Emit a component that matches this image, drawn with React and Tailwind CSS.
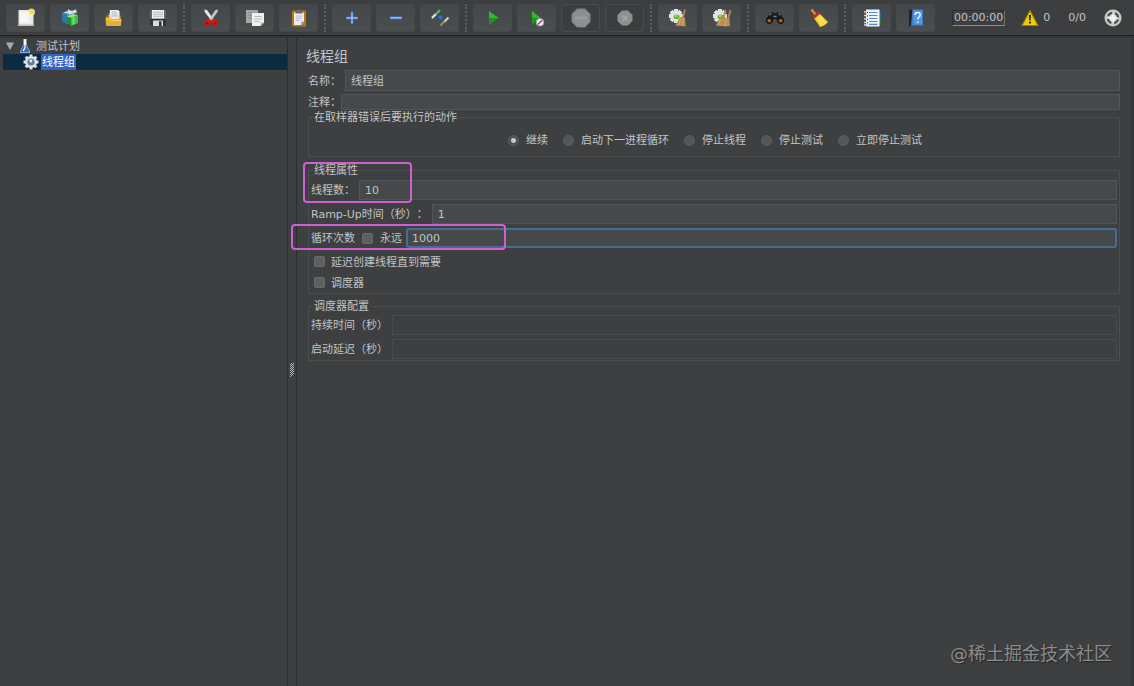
import { useState } from "react";
import clsx from "clsx";

const NewIcon = () => (
  <svg width="20" height="20" viewBox="0 0 20 20">
    <path d="M2.5 2h15v16h-15z" fill="#e9eae6" />
    <path d="M2.5 16.5h15V18h-15z" fill="#bfc1bd" />
    <path d="M4 4h9v11H4z" fill="#f6f6f3" />
    <circle cx="15.5" cy="4" r="3.6" fill="#f1ef9a" opacity="0.8" />
    <circle cx="15.5" cy="4" r="1.8" fill="#e4de3c" />
  </svg>
);

const TemplatesIcon = () => (
  <svg width="20" height="20" viewBox="0 0 20 20">
    <path d="M2 5l6-2 3 2v10l-3 1-6-3z" fill="#4d8fc0" />
    <path d="M2 5l5 1.5V16L2 13z" fill="#2f76ad" />
    <path d="M3 4.6l5-1.8 8-.3 1.5 1.8-6 2.2z" fill="#c3d3da" />
    <path d="M8 1.8l3 2.2-2 2M16 1.8l-3 2" stroke="#e5edf0" strokeWidth="1.2" fill="none" />
    <path d="M7 8.5l4 1.3v8L7 15.5z" fill="#1d9426" />
    <path d="M11 9.8L18 7v8l-7 2.8z" fill="#37c43c" />
    <path d="M7 8.5L13 6l5 1-7 2.8z" fill="#91e887" />
    <path d="M12.5 9.3l2-.8v7.8l-2 .8z" fill="#78dc6b" />
  </svg>
);

const OpenIcon = () => (
  <svg width="20" height="20" viewBox="0 0 20 20">
    <path d="M2 8l3-2h10l2 2v4H2z" fill="#a97618" />
    <path d="M6 2h8l1.5 1.5V11H5z" fill="#eceef0" />
    <path d="M7.5 4h5M7.5 6h6M7 8h7" stroke="#9fa6ad" strokeWidth="0.8" />
    <path d="M1.5 10.5q0-1 1-1h4l1 1.3h9q1 0 1 1L17 17q0 1-1.2 1H3.2Q2 18 2 17z" fill="#eaaf35" />
    <path d="M2.3 11h4l1 1.3h9.5" stroke="#f8d477" fill="none" />
  </svg>
);

const SaveIcon = () => (
  <svg width="20" height="20" viewBox="0 0 20 20">
    <path d="M2 2.500q0-.500.500-.500h15q.500 0 .500.500V18H4l-2-2z" fill="#5f6467" />
    <path d="M2 11h16v7H4l-2-2z" fill="#2f3335" />
    <path d="M4 2h12v8.500H4z" fill="#f0f1f1" />
    <path d="M5 4.200h10M5 6.200h10M5 8.200h10" stroke="#a4a7a9" strokeWidth="0.8" />
    <path d="M5 12.500h10V18H5z" fill="#d9dbdc" />
    <path d="M11 13.300h2.500V18H11z" fill="#303335" />
  </svg>
);

const CutIcon = () => (
  <svg width="20" height="20" viewBox="0 0 20 20">
    <path d="M3.500 1.500l2.500.6L13 12l-2 1.500L3.700 4z" fill="#e6e8e9" />
    <path d="M17 1.500l-2.500.6L7.500 12l2 1.500L16.500 4z" fill="#c4c8ca" />
    <path d="M9 11l-4 .7-2 3.300L4.500 18.500l4-1 1.500-4.500M11 11l4 .7 2 3.300-1.500 3.500-4-1L10 13" fill="#d31510" />
    <circle cx="6" cy="15.500" r="1" fill="#6b1a18" />
    <circle cx="14.300" cy="15.500" r="1" fill="#6b1a18" />
  </svg>
);

const CopyIcon = () => (
  <svg width="20" height="20" viewBox="0 0 20 20">
    <path d="M1 2h12v13H1z" fill="#a3a6a7" />
    <path d="M3 5h7M3 7.500h4M3 10h4" stroke="#8b8f90" />
    <path d="M7 5h12v9.500L15.500 18H7z" fill="#eeefee" />
    <path d="M9.500 8.500h7M9.500 11h7M9.500 13.500h5" stroke="#b3b6b6" strokeWidth="0.9" />
    <path d="M15.500 18v-3.500H19z" fill="#bdc0c0" />
  </svg>
);

const PasteIcon = () => (
  <svg width="20" height="20" viewBox="0 0 20 20">
    <rect x="3" y="2.500" width="14" height="16" rx="1" fill="#b27a16" />
    <path d="M5 4.500h10v9L12 17H5z" fill="#ecebef" />
    <path d="M6.800 8h6.500M6.800 10.200h6.500M6.800 12.400h4" stroke="#b4b2ba" strokeWidth="0.9" />
    <path d="M12 17v-3.500h3z" fill="#a9a7ad" />
    <path d="M6.500 5.500v-2L8.500 3l.500-1.500h2L11.500 3l2 .500v2z" fill="#6e6864" />
  </svg>
);

const PlusIcon = () => (
  <svg width="20" height="20" viewBox="0 0 20 20">
    <path d="M10 4v12M4 10h12" stroke="#3d75c4" strokeWidth="2.600" />
    <path d="M10 4.500v11M4.500 10h11" stroke="#8fc0f4" strokeWidth="1.400" />
  </svg>
);

const MinusIcon = () => (
  <svg width="20" height="20" viewBox="0 0 20 20">
    <path d="M4 10h12" stroke="#3f78c8" strokeWidth="3" />
    <path d="M4.500 9.700h11" stroke="#98c3f2" strokeWidth="1.400" />
  </svg>
);

const ToggleIcon = () => (
  <svg width="20" height="20" viewBox="0 0 20 20">
    <path d="M2 10l4-4" stroke="#dfe0dc" strokeWidth="2.400" />
    <path d="M6 6l4-4" stroke="#6fae4e" strokeWidth="2.200" />
    <path d="M8 7l5 5" stroke="#1c50ad" strokeWidth="2.600" />
    <circle cx="10.500" cy="9.500" r="2" fill="#2e6fd6" />
    <path d="M10.500 17.500l4-4" stroke="#8a9a52" strokeWidth="2.200" />
    <path d="M14.500 13.500l4-4" stroke="#cfd9bf" strokeWidth="2.200" />
  </svg>
);

const StartIcon = () => (
  <svg width="20" height="20" viewBox="0 0 20 20">
    <path d="M6 3l9.500 7L6 17z" fill="#149a14" />
    <path d="M6 3l9.500 7H6z" fill="#35b52f" />
  </svg>
);

const StartNoPausesIcon = () => (
  <svg width="20" height="20" viewBox="0 0 20 20">
    <path d="M5 3l8.500 7L5 17z" fill="#149a14" />
    <path d="M5 3l8.500 7H5z" fill="#35b52f" />
    <circle cx="13" cy="14.300" r="3.800" fill="#f1f4f8" stroke="#7d9fc6" strokeWidth="0.800" />
    <path d="M10.800 16.400l4.400-4.200" stroke="#c8362e" strokeWidth="1.400" />
  </svg>
);

const StopIcon = () => (
  <svg width="20" height="20" viewBox="0 0 20 20">
    <path d="M6 .500h8L19.500 6v8L14 19.500H6L.500 14V6z" fill="#7e8181" />
    <path d="M6.500 1.500h7l5 5v7l-5 5h-7l-5-5v-7z" fill="#8c8f8f" />
    <path d="M4 8.500h12v3H4z" fill="#979a9a" />
  </svg>
);

const ShutdownIcon = () => (
  <svg width="20" height="20" viewBox="0 0 20 20">
    <path d="M7 2.500h6L17.500 7v6L13 17.500H7L2.500 13V7z" fill="#8e9191" />
    <path d="M7.500 7.500l5 5M12.500 7.500l-5 5" stroke="#a5a7a7" strokeWidth="1.600" />
  </svg>
);

const gearTeeth = [0, 45, 90, 135, 180, 225, 270, 315];

const SmallGear = () => (
  <g>
    {gearTeeth.map((a) => (
      <rect key={a} x="6" y="1" width="4" height="4" fill="#e2e5e6" transform={`rotate(${a} 8 8)`} />
    ))}
    <circle cx="8" cy="8" r="5.500" fill="#e2e5e6" />
    <ellipse cx="8.500" cy="8.700" rx="3" ry="2.300" fill="#62b51e" />
    <ellipse cx="8" cy="8" rx="1.600" ry="1" fill="#a6e35b" />
  </g>
);

const ClearIcon = () => (
  <svg width="20" height="20" viewBox="0 0 20 20">
    <SmallGear />
    <path d="M17 1.500l-2.200 8" stroke="#b28a58" strokeWidth="1.800" />
    <path d="M12 9l5 .500.500 9-10-1z" fill="#b98f56" />
    <path d="M12.800 11l-2 6M15 11l-.500 7" stroke="#d4ac70" strokeWidth="0.800" />
  </svg>
);

const ClearAllIcon = () => (
  <svg width="20" height="20" viewBox="0 0 20 20">
    <SmallGear />
    <path d="M13.500 2l-2 8M18.500 2l-2.200 8" stroke="#b28a58" strokeWidth="1.800" />
    <path d="M8 9.500l9.500.500.500 8-5 .500-9-1z" fill="#b98f56" />
    <path d="M9 11l-2.500 6M14 11l-1 7" stroke="#d4ac70" strokeWidth="0.800" />
  </svg>
);

const SearchIcon = () => (
  <svg width="20" height="20" viewBox="0 0 20 20">
    <path d="M4 6l3-2 2 1h2l2-1 3 2 3 7-5 2-3-4H9l-3 4-5-2z" fill="#1d1d1d" />
    <path d="M4.500 7l2-1.500M15.500 7l-2-1.500M8.500 8.500h3" stroke="#777b7c" strokeWidth="1.300" />
    <circle cx="4.300" cy="12.500" r="3" fill="#292421" stroke="#0d0d0d" />
    <circle cx="15.700" cy="12.500" r="3" fill="#292421" stroke="#0d0d0d" />
    <circle cx="4.300" cy="12.700" r="1.800" fill="#a5622f" />
    <circle cx="15.700" cy="12.700" r="1.800" fill="#a5622f" />
  </svg>
);

const BroomIcon = () => (
  <svg width="20" height="20" viewBox="0 0 20 20">
    <path d="M2.500 1.500l4 5" stroke="#d8892c" strokeWidth="2.800" />
    <path d="M10.500 5.500l8.500 8.500q-3 4-8 5L5 10z" fill="#f3cf2c" />
    <path d="M9 10l4.500 7M11 8.500l5.500 7" stroke="#fbf08b" strokeWidth="1.200" />
    <path d="M4 8.300L9.300 3.800l1.700 2L5.700 10.500z" fill="#c52a19" />
  </svg>
);

const FunctionIcon = () => (
  <svg width="20" height="20" viewBox="0 0 20 20">
    <path d="M17 4h1.500v13H17z" fill="#2a8e3b" />
    <path d="M17.500 6H19v4h-1.500z" fill="#2b62c0" />
    <rect x="4" y="1.500" width="13.500" height="17" fill="#f1f4f6" />
    <path d="M7 4.500h8.500M7 7.500h8.500M7 10.500h8.500M7 13.500h8.500M7 16.300h8.500" stroke="#4b8dce" strokeWidth="1.200" />
    <path d="M2 4h4M2 7.500h4M2 11h4M2 14.500h4M2 17h4" stroke="#d7d9da" strokeWidth="1.300" />
    <path d="M5 4.500h1M5 8h1M5 11.500h1M5 15h1" stroke="#333" />
  </svg>
);

const HelpIcon = () => (
  <svg width="20" height="20" viewBox="0 0 20 20">
    <path d="M3 2l3.500-.500V17L3 18.500z" fill="#15213d" />
    <path d="M6.500 1.500H17v16H5z" fill="#3a7fd0" />
    <path d="M7.500 2.500H16v14H7.500z" fill="#5596df" />
    <path d="M9 7q0-2.600 2.600-2.600T14.200 7q0 1.500-1.500 2.300-1 .6-1 2.200M11.700 13.600v1.500" stroke="#eaf4ff" strokeWidth="1.500" fill="none" />
  </svg>
);

const WarningIcon = () => (
  <svg width="18" height="18" viewBox="0 0 18 18">
    <path d="M9 1.500L17 16.500H1z" fill="#f1cb12" stroke="#9a7c08" strokeWidth="1.200" strokeLinejoin="round" />
    <path d="M8 6h2l-.4 5.500H8.400z" fill="#2a2408" />
    <circle cx="9" cy="13.600" r="1.100" fill="#2a2408" />
  </svg>
);

const RemoteIcon = () => (
  <svg width="18" height="18" viewBox="0 0 18 18">
    <circle cx="9" cy="9" r="8.500" fill="#c9cbcb" />
    <circle cx="9" cy="9" r="5.200" fill="#d8dada" stroke="#4b4e4f" strokeWidth="2.200" strokeDasharray="5.200 2.960" strokeDashoffset="-1.500" />
    <path d="M9 5.500v7M5.500 9h7" stroke="#f4f5f5" strokeWidth="2.400" />
  </svg>
);

const FlaskIcon = () => (
  <svg width="12" height="16" viewBox="0 0 12 16">
    <path d="M4.500 1h3v5.500l3.500 7Q11 15 9.500 15h-7Q1 15 1 13.500l3.500-7z" fill="#dfe8f0" />
    <path d="M4.500 7h3l3 6.500q0 1-1 1h-7q-1 0-1-1z" fill="#2e70c2" />
    <path d="M6 1.500v8l-1.800 3.500" stroke="#fff" strokeWidth="1.200" fill="none" />
  </svg>
);

const ThreadGroupIcon = () => (
  <svg width="16" height="16" viewBox="0 0 16 16">
    {gearTeeth.map((a) => (
      <rect key={a} x="6.500" y="0.500" width="3" height="4" fill="#dfe3e6" transform={`rotate(${a} 8 8)`} />
    ))}
    <circle cx="8" cy="8" r="6" fill="#dfe3e6" />
    <circle cx="8" cy="8" r="3.600" fill="#5d7c9c" />
    <path d="M6 6.300q2-1.600 3.500.2L8 9z" fill="#e9f1f8" />
  </svg>
);

const toolbarGroups = [
  [
    { title: "新建", Icon: NewIcon },
    { title: "模板", Icon: TemplatesIcon },
    { title: "打开", Icon: OpenIcon },
    { title: "保存", Icon: SaveIcon },
  ],
  [
    { title: "剪切", Icon: CutIcon },
    { title: "复制", Icon: CopyIcon },
    { title: "粘贴", Icon: PasteIcon },
  ],
  [
    { title: "展开", Icon: PlusIcon },
    { title: "折叠", Icon: MinusIcon },
    { title: "切换", Icon: ToggleIcon },
  ],
  [
    { title: "启动", Icon: StartIcon },
    { title: "不停顿开始", Icon: StartNoPausesIcon },
    { title: "停止", Icon: StopIcon, disabled: true },
    { title: "关闭", Icon: ShutdownIcon, disabled: true },
  ],
  [
    { title: "清除", Icon: ClearIcon },
    { title: "清除全部", Icon: ClearAllIcon },
  ],
  [
    { title: "查找", Icon: SearchIcon },
    { title: "重置搜索", Icon: BroomIcon },
  ],
  [
    { title: "函数助手", Icon: FunctionIcon },
    { title: "帮助", Icon: HelpIcon },
  ],
];

const errorActions = [
  { value: "continue", label: "继续" },
  { value: "startNextLoop", label: "启动下一进程循环" },
  { value: "stopThread", label: "停止线程" },
  { value: "stopTest", label: "停止测试" },
  { value: "stopTestNow", label: "立即停止测试" },
];

const ToolButton = ({ title, Icon, disabled }) => (
  <button
    type="button"
    aria-label={title}
    disabled={disabled}
    className={clsx(
      "flex h-7 w-[39px] items-center justify-center rounded-[3px] border",
      disabled
        ? "border-[#494b4d] bg-[#3b3d3f]"
        : "border-[#46494a] bg-linear-to-b from-[#45484a] to-[#4a4e4f]"
    )}
  >
    <Icon />
  </button>
);

const Toolbar = () => (
  <header className="flex h-9 shrink-0 items-center border-b border-[#1f2022] bg-[#3c3e40] pl-[6px] pr-3">
    {toolbarGroups.map((group, i) => (
      <div key={i} className="flex items-center">
        {i > 0 && (
          <div className="flex w-[14px] justify-center">
            <div className="h-7 border-l-2 border-dotted border-[#5c5f60]" />
          </div>
        )}
        <div className="flex gap-[5px]">
          {group.map((item) => (
            <ToolButton key={item.title} {...item} />
          ))}
        </div>
      </div>
    ))}
    <div className="ml-auto flex items-center whitespace-nowrap">
      <span className="border border-t-[#2c2e2f] border-l-[#2c2e2f] border-r-[#6a6d6e] border-b-[#8a8d8e] px-px leading-[14px]">
        00:00:00
      </span>
      <span className="ml-4 flex items-center gap-1">
        <WarningIcon />0
      </span>
      <span className="mx-[18px]">0/0</span>
      <RemoteIcon />
    </div>
  </header>
);

const TestTree = () => (
  <nav className="w-[288px] shrink-0 border-r border-[#2b2c2e] pl-[3px]">
    <ul>
      <li>
        <div className="flex h-4 items-center pl-[3px]">
          <svg width="8" height="8" viewBox="0 0 8 8">
            <path d="M0 .500h8L4 8z" fill="#a7a9aa" />
          </svg>
          <span className="ml-[5px]">
            <FlaskIcon />
          </span>
          <span className="ml-[5px] pt-[2px]">测试计划</span>
        </div>
        <ul>
          <li className="flex h-4 items-center bg-[#0c2a40] pl-5">
            <ThreadGroupIcon />
            <span className="ml-[2px] bg-[#3263c4] px-px pt-[2px] leading-[14px] text-white">线程组</span>
          </li>
        </ul>
      </li>
    </ul>
  </nav>
);

const Splitter = () => (
  <div className="flex w-[9px] shrink-0 items-center justify-center border-r border-[#2b2c2e] pt-4">
    <svg width="4" height="14" viewBox="0 0 4 14">
      <path d="M0 2l2-2M0 4l4-4M0 6l4-4M0 8l4-4M0 10l4-4M0 12l4-4M0 14l4-4" stroke="#c0c2c3" strokeWidth="0.900" />
    </svg>
  </div>
);

const TextField = ({ id, className, ...props }) => (
  <input
    id={id}
    type="text"
    autoComplete="off"
    className={clsx(
      "min-w-0 flex-1 pt-[2px] outline-none",
      className || "border border-[#515556] bg-[#45494a] px-[5px]"
    )}
    {...props}
  />
);

const FieldLabel = ({ htmlFor, className, children }) => (
  <label htmlFor={htmlFor} className={clsx("self-center pt-[2px]", className)}>
    {children}
  </label>
);

const CheckBox = ({ name, className, children }) => (
  <label className={clsx("flex items-center", className)}>
    <input
      type="checkbox"
      name={name}
      className="size-[11px] shrink-0 appearance-none rounded-xs border border-[#696c6d] bg-[#5d6061] checked:bg-[#a9abac]"
    />
    <span className="pt-[2px]">{children}</span>
  </label>
);

const Group = ({ title, className, children }) => (
  <fieldset className={clsx("min-w-0 border border-[#4b4e4f]", className)}>
    <legend className="ml-1 h-[14px] px-px pt-[2px] leading-3">{title}</legend>
    {children}
  </fieldset>
);

const ThreadGroupPanel = () => {
  const [action, setAction] = useState("continue");
  const [formData, setFormData] = useState({
    name: "线程组",
    comments: "",
    threads: "10",
    rampUp: "1",
    loops: "1000",
  });

  const handleChange = (e) => {
    const { name, value } = e.target;
    setFormData((prev) => ({ ...prev, [name]: value }));
  };

  const bind = (name) => ({
    id: name,
    name,
    value: formData[name],
    onChange: handleChange,
  });

  return (
    <main className="relative min-w-0 flex-1 border-r-[3px] border-[#343537] px-[9px] pt-2">
      <h1 className="text-sm leading-5">线程组</h1>

      <form className="mt-1 px-[2px]" onSubmit={(e) => e.preventDefault()}>
        <div className="flex h-[21px]">
          <FieldLabel htmlFor="name" className="mr-1">名称：</FieldLabel>
          <TextField {...bind("name")} />
        </div>
        <div className="mt-[3px] flex h-4">
          <FieldLabel htmlFor="comments">注释：</FieldLabel>
          <TextField {...bind("comments")} />
        </div>

        <Group title="在取样器错误后要执行的动作">
          <div className="flex h-8 items-center justify-center gap-[15px] pl-[2px]">
            {errorActions.map(({ value, label }) => (
              <label key={value} className="flex items-center gap-[7px]">
                <input
                  type="radio"
                  name="action"
                  value={value}
                  checked={action === value}
                  onChange={() => setAction(value)}
                  className="size-[11px] appearance-none rounded-full border border-[#5c5f60] bg-[#545657] checked:bg-[radial-gradient(circle,#c8caca_0_2px,#4c4f50_3px)]"
                />
                <span className="pt-[2px]">{label}</span>
              </label>
            ))}
          </div>
        </Group>

        <Group title="线程属性" className="mt-[6px]">
          <div className="flex flex-col gap-1 px-[2px] pt-[3px]">
            <div className="flex h-5">
              <FieldLabel htmlFor="threads" className="mr-1">线程数：</FieldLabel>
              <TextField {...bind("threads")} />
            </div>
            <div className="flex h-5">
              <FieldLabel htmlFor="rampUp" className="mr-1">Ramp-Up时间（秒）：</FieldLabel>
              <TextField {...bind("rampUp")} />
            </div>
            <div className="flex h-5">
              <FieldLabel htmlFor="loops" className="mr-[7px]">循环次数</FieldLabel>
              <CheckBox name="forever" className="mr-1 gap-[7px]">永远</CheckBox>
              <TextField
                {...bind("loops")}
                className="rounded-[3px] border-2 border-[#466d94] bg-[#45494a] px-1"
              />
            </div>
          </div>
          <div className="mt-[3px] pl-[5px]">
            <CheckBox name="delayedStart" className="h-[21px] gap-[6px]">延迟创建线程直到需要</CheckBox>
            <CheckBox name="scheduler" className="h-[21px] gap-[6px]">调度器</CheckBox>
          </div>
        </Group>

        <Group title="调度器配置" className="mt-[5px]">
          <div className="flex flex-col gap-1 px-[2px] pt-[2px] pb-px">
            <div className="flex h-5">
              <FieldLabel htmlFor="duration" className="mr-1">持续时间（秒）</FieldLabel>
              <TextField id="duration" disabled className="border border-[#484b4c]" />
            </div>
            <div className="flex h-5">
              <FieldLabel htmlFor="delay" className="mr-1">启动延迟（秒）</FieldLabel>
              <TextField id="delay" disabled className="border border-[#484b4c]" />
            </div>
          </div>
        </Group>
      </form>

      {/* highlight marks drawn over the thread count and loop count */}
      <div className="pointer-events-none absolute top-[124px] left-[6px] h-[41px] w-[109px] rounded-[4px] border-2 border-[#d05fd0]" />
      <div className="pointer-events-none absolute top-[186px] -left-[6px] h-[26px] w-[215px] rounded-[4px] border-2 border-[#d05fd0]" />

      <p className="pointer-events-none absolute right-[19px] bottom-5 text-lg leading-6 text-[#8b8c8d] [text-shadow:1px_1px_1px_#242526]">
        @稀土掘金技术社区
      </p>
    </main>
  );
};

const App = () => {
  return (
    <div
      lang="zh-CN"
      className="flex min-h-screen flex-col bg-[#3d3f41] font-['DejaVu_Sans','Noto_Sans_CJK_SC',sans-serif] text-[11px] leading-4 text-[#c3c4c5] [text-spacing-trim:space-all]"
    >
      <Toolbar />
      <div className="flex flex-1 border-t-2 border-[#343537]">
        <TestTree />
        <Splitter />
        <ThreadGroupPanel />
      </div>
    </div>
  );
};

export default App;
